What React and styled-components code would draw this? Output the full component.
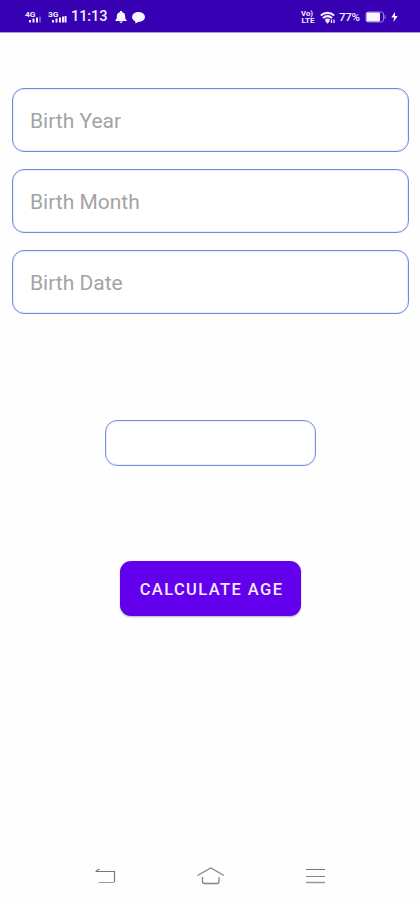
import React from 'react';
import styled, { createGlobalStyle } from 'styled-components';

const GlobalStyle = createGlobalStyle`
  * {
    box-sizing: border-box;
  }

  body {
    margin: 0;
    background-color: #fefefe;
    font-family: Roboto, sans-serif;
  }
`;

const Screen = styled.div`
  display: flex;
  flex-direction: column;
  height: 900px;
  overflow: hidden;
`;

const StatusBar = styled.header`
  display: flex;
  justify-content: space-between;
  height: 33px;
  padding: 0 22px 0 24px;
  background-color: #3700b3;
  border-bottom: 1px solid #aa98dc;
  color: #f2edff;
`;

const StatusGroup = styled.div`
  display: flex;
  align-items: center;
  height: 34px;
`;

const Icon = styled.svg`
  display: block;
  flex: none;
  margin-left: ${({ $gap }) => $gap || 0}px;
`;

const SmallLabel = styled.text`
  font: 700 ${({ $size }) => $size || 8}px Roboto, sans-serif;
  fill: #f2edff;
`;

const Clock = styled.span`
  width: 36px;
  margin-left: 4px;
  font-size: 14.5px;
  font-weight: 500;
  line-height: 18px;
  letter-spacing: -0.1px;
  white-space: nowrap;
`;

const Percent = styled.span`
  width: 22px;
  margin-left: 3px;
  font-size: 11.5px;
  font-weight: 500;
  letter-spacing: -0.3px;
`;

const Main = styled.main`
  display: flex;
  flex: 1;
  flex-direction: column;
  align-items: center;
  padding: 55px 11px 0 12px;
`;

const Form = styled.div`
  display: flex;
  flex-direction: column;
  gap: 17px;
  width: 100%;
`;

const Field = styled.input`
  width: 100%;
  height: 64px;
  padding: 1px 17px 0;
  border: 1px solid #7288d8;
  border-radius: 12px;
  background-color: #fff;
  color: #333;
  font: 400 21px Roboto, sans-serif;
  outline: none;
  box-shadow: inset 0 0 0 1px #e6edfc;

  &::placeholder {
    color: #a3a3a3;
    opacity: 1;
  }
`;

const Result = styled.output`
  width: 211px;
  height: 46px;
  margin-top: 106px;
  border: 1px solid #7c8fdd;
  border-radius: 12px;
  background-color: #fff;
  box-shadow: inset 0 0 0 1px #eaebfd;
`;

const Button = styled.button`
  width: 181px;
  height: 55px;
  margin-top: 95px;
  padding: 2px 0 0 2px;
  border: 0;
  border-radius: 11px;
  background-color: #6200ee;
  color: #f4e9ff;
  font: 500 16.5px Roboto, sans-serif;
  letter-spacing: 1.4px;
  white-space: nowrap;
  box-shadow: 0 1px 2px rgba(0, 0, 0, 0.3);
`;

const NavBar = styled.nav`
  display: flex;
  justify-content: space-between;
  align-items: center;
  height: 48px;
  padding: 0 94px;
`;

const Signal = ({ label, gap, full }) => (
  <Icon $gap={gap} width="20" height="16" viewBox="0 0 20 16" fill="#f2edff">
    <SmallLabel x="1" y="7.5" textLength="10.5" lengthAdjust="spacingAndGlyphs">{label}</SmallLabel>
    <rect x="5" y="11" width="2" height="2.5" />
    <rect x="8.5" y="9.5" width="2" height="4" />
    <rect x="12" y="8.5" width="2" height="5" />
    <rect x="15" y="7.5" width="2" height="6" opacity={full ? 1 : 0.35} />
    {full && <rect x="17.5" y="7" width="2" height="6.5" />}
  </Icon>
);

const App = () => (
  <>
    <GlobalStyle />
    <Screen>
      <StatusBar>
        <StatusGroup>
          <Signal label="4G" />
          <Signal label="3G" gap={3} full />
          <Clock>11:13</Clock>
          <Icon $gap={8} width="12" height="14" viewBox="0 0 12 14" fill="#f7f4ff">
            <path d="M5 1h2v1c2.2.6 3.2 2.2 3.2 4.2v2L12 11H0l1.8-2.8v-2C1.8 4.200 2.8 2.600 5 2zM4 11.500h4L6 13.200z" />
          </Icon>
          <Icon $gap={5} width="13" height="13" viewBox="0 0 13 13" fill="#f7f4ff">
            <ellipse cx="6.5" cy="6" rx="6.5" ry="5" />
            <path d="M3 9l.5 3.5L7 10.5z" />
          </Icon>
        </StatusGroup>
        <StatusGroup>
          <Icon width="14" height="18" viewBox="0 0 14 18">
            <SmallLabel $size={6.5} x="0" y="8" textLength="12" lengthAdjust="spacingAndGlyphs">Vo)</SmallLabel>
            <SmallLabel $size={6.5} x="0.5" y="15" textLength="13" lengthAdjust="spacingAndGlyphs">LTE</SmallLabel>
          </Icon>
          <Icon $gap={5} width="16" height="13" viewBox="0 0 16 13" fill="none" stroke="#f2edff" strokeWidth="2.2">
            <path d="M.8 4.500C4.800.9 10.200.9 14.200 4.500M3 7c2.700-2.300 6.300-2.300 9 0M5.500 9.500c1.300-1.100 2.700-1.100 4 0" />
            <path d="M6.300 10.300h2.400l-1.200 1.400zM11.500 8.500V12M14 8.500V12" fill="#f2edff" strokeWidth="1.3" />
          </Icon>
          <Percent>77%</Percent>
          <Icon $gap={4} width="22" height="12" viewBox="0 0 22 12">
            <rect x="1" y="1" width="17.500" height="10" rx="2" fill="none" stroke="#9c82e0" />
            <rect x="1.500" y="1.500" width="13.500" height="9" rx="1" fill="#f8f5ff" />
            <path d="M20 4v4" stroke="#9c82e0" />
          </Icon>
          <Icon $gap={4} width="7" height="12" viewBox="0 0 7 12" fill="#f8f5ff">
            <path d="M4 1L.3 6.500H3L2.500 11 6.700 5H4z" />
          </Icon>
        </StatusGroup>
      </StatusBar>
      <Main>
        <Form>
          <Field placeholder="Birth Year" />
          <Field placeholder="Birth Month" />
          <Field placeholder="Birth Date" />
        </Form>
        <Result />
        <Button type="button">CALCULATE AGE</Button>
      </Main>
      <NavBar>
        <Icon width="23" height="20" viewBox="0 0 23 20" fill="none" stroke="#777">
          <path d="M5.500 3L2 5M1.500 5.500H20M20.500 5v11" strokeWidth="1.2" />
          <path d="M4.500 16.500H20" stroke="#999" />
        </Icon>
        <Icon width="30" height="20" viewBox="0 0 30 20" fill="none" stroke="#858585" strokeWidth="1.3">
          <path d="M1.500 9.500L14.800 2l13.200 7.500" />
          <path d="M6.500 11v4.500q0 2 2 2h12.500q2 0 2-2V11" />
        </Icon>
        <Icon width="21" height="20" viewBox="0 0 21 20" fill="none">
          <path d="M1 3.500h19" stroke="#777" />
          <path d="M1 10.500h19" stroke="#858585" />
          <path d="M1 16.500h19" stroke="#999" strokeWidth="1.5" />
        </Icon>
      </NavBar>
    </Screen>
  </>
);

export default App;
